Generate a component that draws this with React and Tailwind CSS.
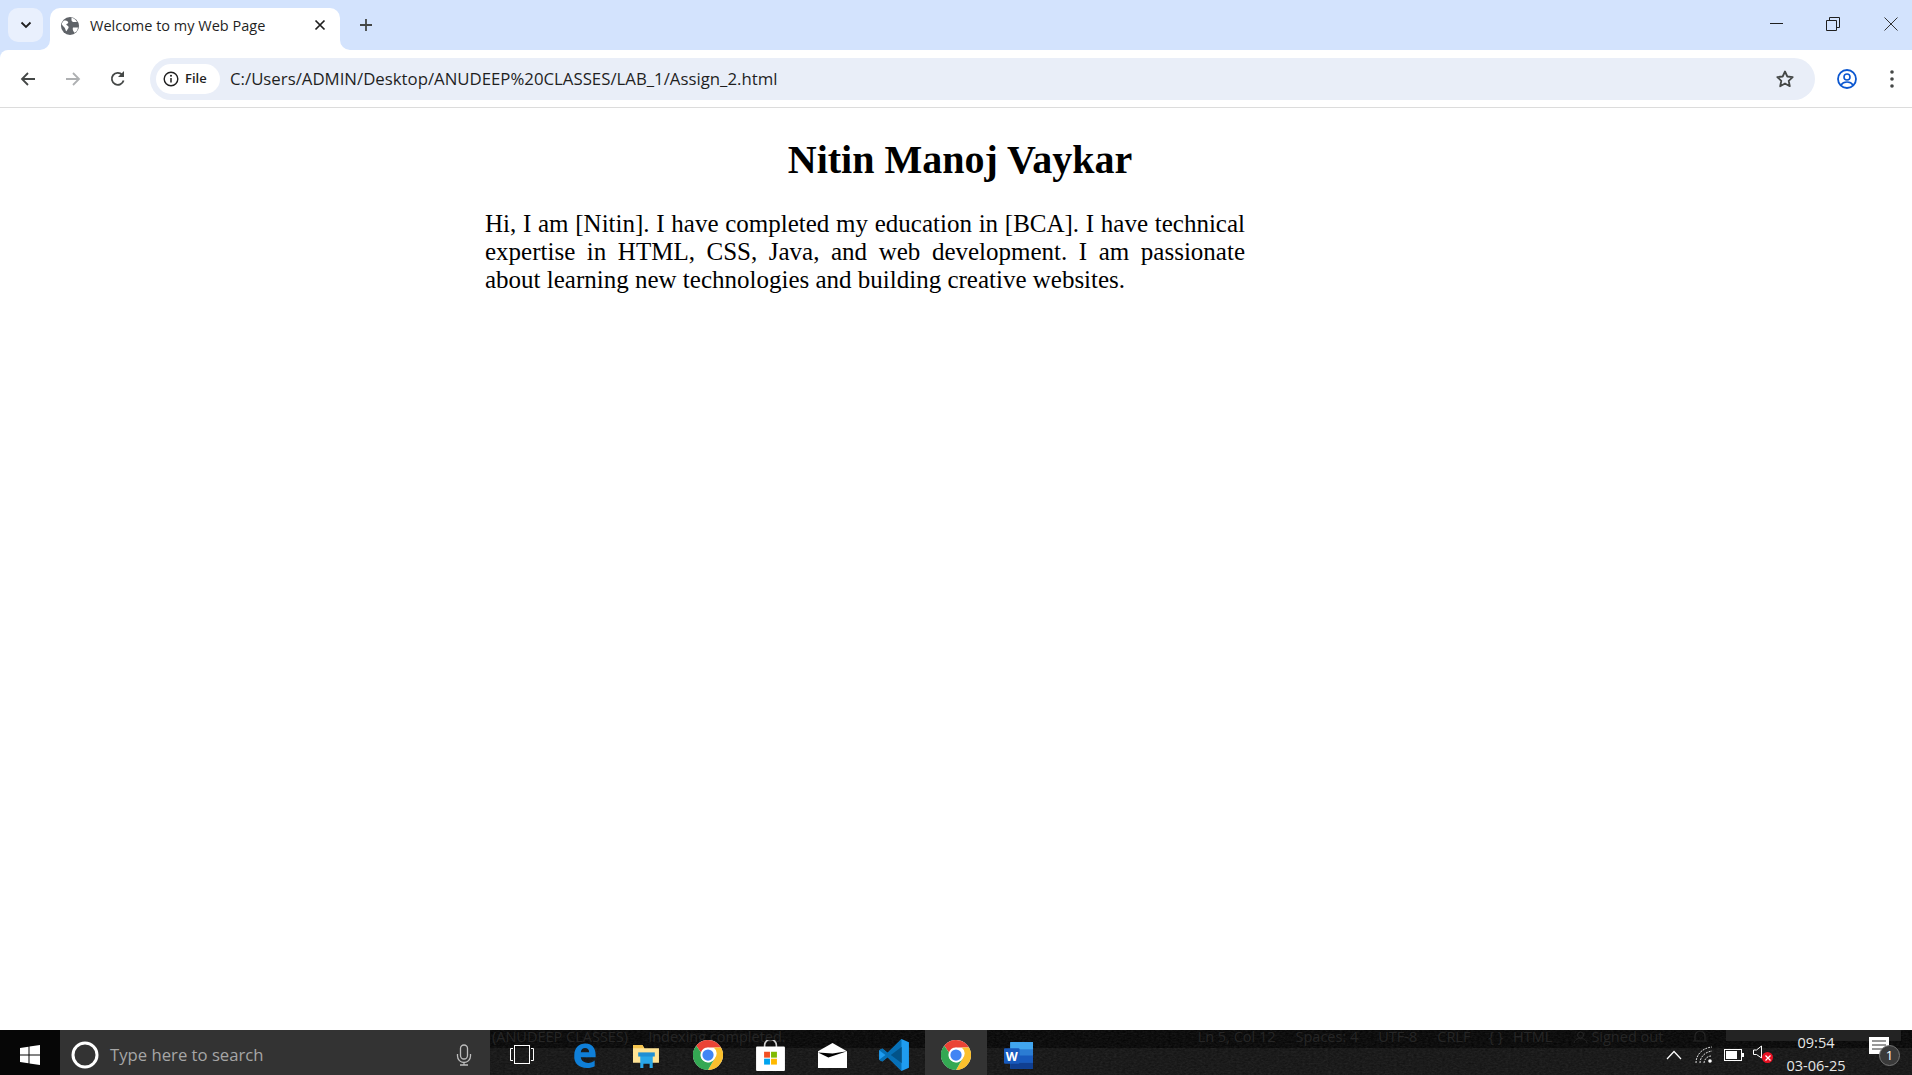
import React from "react";

const UI = { fontFamily: '"Open Sans","Noto Sans",sans-serif' };

function Chrome({ size = 30 }) {
  return (
    <svg width={size} height={size} viewBox="0 0 48 48">
      <circle cx="24" cy="24" r="24" fill="#fff" />
      <path d="M24 0a24 24 0 0 1 20.8 12H24a12 12 0 0 0-11.3 8L5.2 9A24 24 0 0 1 24 0z" fill="#ea4335" />
      <path d="M44.8 12A24 24 0 0 1 24 48l10.4-18A12 12 0 0 0 33 12z" fill="#fbc02d" />
      <path d="M5.2 9A24 24 0 0 0 24 48l10.4-18a12 12 0 0 1-21.7-10z" fill="#34a853" />
      <circle cx="24" cy="24" r="11.5" fill="#fff" />
      <circle cx="24" cy="24" r="9" fill="#4285f4" />
    </svg>
  );
}

function Slot({ children, active }) {
  return (
    <div className={`flex h-[45px] w-[62px] shrink-0 items-center justify-center pt-[5px] ${active ? "bg-[#333333]" : ""}`}>
      {children}
    </div>
  );
}

function Faint({ className = "", children }) {
  return <span className={`whitespace-nowrap ${className}`}>{children}</span>;
}

function Tab() {
  return (
    <div className="relative ml-[7px] mt-[8px] flex h-[42px] w-[290px] items-center rounded-t-[10px] bg-white pb-[7px] pl-[11px]">
      <svg className="absolute bottom-0 left-[-10px]" width="10" height="10" viewBox="0 0 10 10">
        <path d="M10 0v10H0a10 10 0 0 0 10-10z" fill="#fff" />
      </svg>
      <svg className="absolute bottom-0 right-[-10px]" width="10" height="10" viewBox="0 0 10 10">
        <path d="M0 0v10h10A10 10 0 0 1 0 0z" fill="#fff" />
      </svg>
      <svg width="18" height="18" viewBox="0 0 18 18" className="shrink-0">
        <circle cx="9" cy="9" r="9" fill="#5f6368" />
        <path d="M3 3.500c1.500-.3 3 .2 4 1.200.8 1-.5 2-1.500 2.300-.7.7.5 1.500 1.500 2 1 .8.700 2-.2 3-.7 1-1 2-1.800 2.300C4.500 12.500 4 11 3 10 2 9 1 8 .8 7 1 5.800 2 4.500 3 3.500zM10.500.8c2.500.5 4.500 2 5.500 4.200h-3c-1.200 0-2.500-.6-2.500-2zM12 10.500h5c-.3 2.500-1.500 4.300-3.300 5.300-.9-.8-1.700-2-1.900-3.300-.1-.8-.1-1.400.2-2z" fill="#fff" />
      </svg>
      <span style={UI} className="ml-[11px] whitespace-nowrap text-[14.500px] text-[#1f1f1f]">Welcome to my Web Page</span>
      <svg className="absolute left-[262px] top-[9px]" width="16" height="16" viewBox="0 0 16 16">
        <path d="M3.500 3.500l9 9M12.500 3.500l-9 9" stroke="#1f1f1f" strokeWidth="1.700" />
      </svg>
    </div>
  );
}

function TitleBar() {
  return (
    <div className="flex h-[50px] items-start bg-[#d3e3fd]">
      <div className="ml-[8px] mt-[8px] flex h-[34px] w-[35px] items-center justify-center rounded-[10px] bg-[#e9f0fd]">
        <svg width="12" height="8" viewBox="0 0 12 8"><path d="M1.500 1.500L6 6l4.500-4.500" fill="none" stroke="#1f1f1f" strokeWidth="1.800" /></svg>
      </div>
      <Tab />
      <div className="ml-[18px] mt-[17px] flex h-[16px] w-[16px] items-center justify-center">
        <svg width="14" height="14" viewBox="0 0 14 14"><path d="M7 1v12M1 7h12" stroke="#444746" strokeWidth="1.800" /></svg>
      </div>
      <div className="ml-auto mt-[17px] flex items-start">
        <svg width="14" height="14" viewBox="0 0 14 14"><path d="M0 6.500h13" stroke="#1f1f1f" strokeWidth="1" /></svg>
        <svg className="ml-[42px]" width="14" height="14" viewBox="0 0 14 14">
          <path d="M.5 3.500h10v10H.5zM3.500 3.500V.5h10v10h-3" fill="none" stroke="#1f1f1f" strokeWidth="1" />
        </svg>
        <svg className="ml-[44px] mr-[14px]" width="14" height="14" viewBox="0 0 14 14"><path d="M.5.500l13 13M13.500.5l-13 13" stroke="#333" strokeWidth="1" /></svg>
      </div>
    </div>
  );
}

function Toolbar() {
  return (
    <div className="bg-[#d3e3fd]">
      <div className="flex h-[57px] items-center rounded-tl-[8px] bg-white">
        <svg className="ml-[19px] shrink-0" width="18" height="18" viewBox="0 0 18 18"><path d="M16 9H3M9 3L3 9l6 6" fill="none" stroke="#444746" strokeWidth="1.800" /></svg>
        <svg className="ml-[27px] shrink-0" width="18" height="18" viewBox="0 0 18 18"><path d="M2 9h13M9 3l6 6-6 6" fill="none" stroke="#aeb0b2" strokeWidth="1.800" /></svg>
        <svg className="ml-[27px] shrink-0" width="18" height="18" viewBox="0 0 18 18"><path d="M14.600 10.500A6 6 0 1 1 13.300 4.800" fill="none" stroke="#444746" strokeWidth="1.800" /><path d="M15 1v6H9z" fill="#444746" /></svg>
        <div className="ml-[23px] flex h-[42px] w-[1665px] shrink-0 items-center rounded-full bg-[#e9eef8] pl-[6px]">
          <div className="flex h-[30px] w-[64px] items-center rounded-full bg-white pl-[7px]">
            <svg width="16" height="16" viewBox="0 0 16 16"><circle cx="8" cy="8" r="6.800" fill="none" stroke="#1f1f1f" strokeWidth="1.400" /><path d="M8 7v4.500" stroke="#1f1f1f" strokeWidth="1.500" /><circle cx="8" cy="4.800" r="1" fill="#1f1f1f" /></svg>
            <span style={UI} className="ml-[6px] text-[13px] font-semibold text-[#1f1f1f]">File</span>
          </div>
          <span style={UI} className="ml-[10px] whitespace-nowrap pt-[1px] text-[16.800px] text-[#1f1f1f]">C:/Users/ADMIN/Desktop/ANUDEEP%20CLASSES/LAB_1/Assign_2.html</span>
          <svg className="ml-auto mr-[20px]" width="20" height="20" viewBox="0 0 20 20"><path d="M10 2.500l2.300 5 5.400.6-4 3.700 1.100 5.400L10 14.500l-4.800 2.700 1.100-5.400-4-3.700 5.400-.6z" fill="none" stroke="#444746" strokeWidth="1.800" strokeLinejoin="round" /></svg>
        </div>
        <svg className="ml-[22px] shrink-0" width="20" height="20" viewBox="0 0 20 20">
          <circle cx="10" cy="10" r="9" fill="none" stroke="#0b57d0" strokeWidth="1.800" />
          <circle cx="10" cy="8" r="3" fill="none" stroke="#0b57d0" strokeWidth="1.600" />
          <path d="M4 16c1.500-2.500 3.500-3 6-3s4.500.5 6 3" fill="none" stroke="#0b57d0" strokeWidth="1.600" />
        </svg>
        <svg className="ml-[33px] shrink-0" width="4" height="18" viewBox="0 0 4 18"><circle cx="2" cy="2" r="1.800" fill="#444746" /><circle cx="2" cy="9" r="1.800" fill="#444746" /><circle cx="2" cy="16" r="1.800" fill="#444746" /></svg>
      </div>
      <div className="h-[1px] bg-[#dcdcdc]" />
    </div>
  );
}

function Page() {
  return (
    <main className="min-h-0 flex-1 bg-white text-black" style={{ fontFamily: '"Liberation Serif","Times New Roman",serif' }}>
      <h1 className="mt-[29px] pl-[8px] text-center text-[40px] font-bold leading-[46px]">Nitin Manoj Vaykar</h1>
      <p className="ml-[485px] mt-[27px] w-[760px] text-justify text-[25px] leading-[28px]">
        Hi, I am [Nitin]. I have completed my education in [BCA]. I have technical expertise in HTML, CSS, Java, and web development. I am passionate about learning new technologies and building creative websites.
      </p>
    </main>
  );
}

function Taskbar() {
  return (
    <footer className="relative flex h-[45px] items-stretch bg-[#111111]" style={UI}>
      <div className="absolute inset-x-0 top-0 h-[18px] bg-[#030303]" />
      <svg className="absolute inset-0 h-full w-full opacity-[0.12]">
        <filter id="grain"><feTurbulence type="fractalNoise" baseFrequency="0.35 0.6" numOctaves="3" /><feColorMatrix type="saturate" values="0" /></filter>
        <rect width="100%" height="100%" filter="url(#grain)" />
      </svg>
      <div className="absolute inset-x-0 top-0 flex h-[13px] items-center text-[14.500px] leading-[13px] text-[#262626]">
        <Faint className="ml-[492px]">(ANUDEEP CLASSES)</Faint>
        <Faint className="ml-[20px]">Indexing completed.</Faint>
        <Faint className="ml-[412px]">Ln 5, Col 12</Faint>
        <Faint className="ml-[20px]">Spaces: 4</Faint>
        <Faint className="ml-[20px]">UTF-8</Faint>
        <Faint className="ml-[20px]">CRLF</Faint>
        <Faint className="ml-[18px]">{"{ }"}</Faint>
        <Faint className="ml-[10px]">HTML</Faint>
        <svg className="ml-[21px]" width="15" height="13" viewBox="0 0 15 13"><circle cx="7.500" cy="5" r="3" fill="none" stroke="#262626" /><path d="M1 13c1-4 4-4.500 6.500-4.500S13 9 14 13" fill="none" stroke="#262626" /></svg>
        <Faint className="ml-[3px]">Signed out</Faint>
        <svg className="ml-[29px]" width="16" height="13" viewBox="0 0 16 13"><path d="M3 11V6a5 5 0 0 1 10 0v5zM1 11h14" fill="none" stroke="#262626" strokeWidth="1.200" /></svg>
        <div className="ml-[18px] h-[11px] w-[175px] self-start bg-[#232323]" />
      </div>

      <div className="relative flex w-[60px] items-center justify-center bg-[#060606] pt-[5px]">
        <svg width="20" height="20" viewBox="0 0 20 20"><path d="M0 3l8.500-1.300v7.800H0zM9.500 1.500L20 0v9.500H9.500zM0 10.500h8.500v7.800L0 17zM9.500 10.500H20V20L9.500 18.500z" fill="#fff" /></svg>
      </div>
      <div className="relative flex w-[430px] items-center bg-[#333333] pt-[5px]">
        <svg className="ml-[11px]" width="28" height="28" viewBox="0 0 28 28"><circle cx="14" cy="14" r="12" fill="none" stroke="#fff" strokeWidth="3" /></svg>
        <span className="ml-[11px] text-[16.700px] text-[#a6a6a6]">Type here to search</span>
        <svg className="ml-auto mr-[18px]" width="16" height="22" viewBox="0 0 16 22"><rect x="4.500" y="1" width="7" height="14" rx="3.500" fill="none" stroke="#bdbdbd" strokeWidth="1.300" /><path d="M1.500 10v2a6.500 6.500 0 0 0 13 0v-2M8 18.500V21M4 21h8" fill="none" stroke="#bdbdbd" strokeWidth="1.300" /></svg>
      </div>

      <div className="relative ml-[1px] flex">
        <Slot>
          <svg width="24" height="20" viewBox="0 0 24 20"><path d="M3 3.500H.5v12H3M21 3.500h2.500v12H21" fill="none" stroke="#fff" strokeWidth="1" /><rect x="4.500" y=".5" width="15" height="18" fill="none" stroke="#fff" strokeWidth="1" /></svg>
        </Slot>
        <Slot>
          <svg width="25" height="25" viewBox="0 0 24 27"><path d="M1 13C1 5 6 .5 13 .5c7 0 11 5 11 12v3H8c.5 4 4 6 8 6 3 0 5-1 7-2.500v6c-2 1-5 2-8.500 2C6 27 0 22 1 13zm7-3h9c0-3-2-4.500-4.500-4.500S8.500 7 8 10z" fill="#0f7fd8" /></svg>
        </Slot>
        <Slot>
          <svg width="27" height="25" viewBox="0 0 26 24"><path d="M0 2h9l2 3h14v14H0z" fill="#ffe394" /><path d="M0 2h9l2 3H0z" fill="#f5c44e" /><path d="M7 11h12v13h-3v-4h-6v4H7z" fill="#29a7e8" /><path d="M5 9h16v4H5z" fill="#1f8fd3" /></svg>
        </Slot>
        <Slot><Chrome /></Slot>
        <Slot>
          <svg width="29" height="31" viewBox="0 0 27 29"><path d="M8 8V5a5.500 5.500 0 0 1 11 0v3" fill="none" stroke="#cfcfcf" strokeWidth="1.500" /><rect y="6" width="27" height="23" rx="1" fill="#fff" /><rect x="7.500" y="11" width="5.500" height="5.500" fill="#f25022" /><rect x="14" y="11" width="5.500" height="5.500" fill="#7fba00" /><rect x="7.500" y="17.500" width="5.500" height="5.500" fill="#00a4ef" /><rect x="14" y="17.500" width="5.500" height="5.500" fill="#ffb900" /></svg>
        </Slot>
        <Slot>
          <svg width="29" height="25" viewBox="0 0 28 24"><path d="M0 8L14 0l14 8v16H0z" fill="#fff" /><path d="M0 9l14 1 14-2-18 6z" fill="#000" /></svg>
        </Slot>
        <Slot>
          <svg width="30" height="32" viewBox="0 0 28 30"><path d="M21 0l7 3v24l-7 3L8 17l-5 4-3-1.500v-9L3 9l5 4z" fill="#1f9cf0" /><path d="M21 7.500v15L11 15z" fill="#0b0b0b" /><path d="M21 0L8 13 3 9l-3 1.500 6 4.500-6 4.500L3 21l5-4 13 13z" fill="#0065a9" opacity="0.8" /></svg>
        </Slot>
        <Slot active><Chrome /></Slot>
        <Slot>
          <svg width="29" height="29" viewBox="0 0 28 28"><rect x="6" y="1" width="22" height="26" rx="1.500" fill="#2b7cd3" /><rect x="6" y="1" width="22" height="7" fill="#41a5ee" /><rect x="6" y="14" width="22" height="7" fill="#185abd" /><rect x="6" y="21" width="22" height="6" fill="#103f91" /><rect y="7" width="15" height="15" rx="1" fill="#185abd" /><text x="7.500" y="19" textAnchor="middle" fontSize="12" fontWeight="700" fill="#fff" fontFamily="Open Sans">W</text></svg>
        </Slot>
      </div>

      <div className="relative ml-auto flex items-center pt-[5px] text-white">
        <svg width="16" height="10" viewBox="0 0 16 10"><path d="M1 9l7-7.500L15 9" fill="none" stroke="#fff" strokeWidth="1.200" /></svg>
        <svg className="ml-[13px]" width="20" height="18" viewBox="0 0 20 18"><path d="M1 17C1 9 7 2 17 1M5 17C5 11 10 6 17 5M9 17c0-3 3-7 7-7" fill="none" stroke="#ddd" strokeWidth="1" strokeDasharray="2 1" /><circle cx="15" cy="15" r="1.800" fill="#fff" /></svg>
        <svg className="ml-[9px]" width="20" height="12" viewBox="0 0 20 12"><rect x=".5" y=".5" width="17" height="11" fill="none" stroke="#fff" /><rect x="2" y="2" width="11" height="8" fill="#fff" /><rect x="18" y="4" width="2" height="4" fill="#fff" /></svg>
        <div className="relative ml-[9px] h-[20px] w-[20px]">
          <svg width="10" height="16" viewBox="0 0 10 16"><path d="M.5 5h3L8.500 1v12l-5-3.500h-3z" fill="none" stroke="#fff" /></svg>
          <div className="absolute left-[9px] top-[7px] flex h-[11px] w-[11px] items-center justify-center rounded-full bg-[#e81123]">
            <svg width="6" height="6" viewBox="0 0 6 6"><path d="M.5.500l5 5M5.500.5l-5 5" stroke="#fff" strokeWidth="1.200" /></svg>
          </div>
        </div>
        <div className="-mt-[3px] ml-[4px] flex w-[78px] flex-col items-center pt-[1px] text-[14.500px] leading-[23px] text-[#e6e6e6]">
          <span>09:54</span>
          <span>03-06-25</span>
        </div>
        <div className="relative ml-[14px] mr-[18px] h-[30px] w-[25px]">
          <svg width="20" height="19" viewBox="0 0 20 19" className="absolute left-[0px] top-[-3px]"><path d="M0 0h20v17H0z" fill="#fff" /><path d="M3 4h14M3 8h14M3 12h14" stroke="#333" strokeWidth="1" /></svg>
          <div className="absolute left-[10px] top-[5px] flex h-[21px] w-[21px] items-center justify-center rounded-full border border-[#777] bg-[#3a3a3a] text-[13px] leading-none text-white">1</div>
        </div>
      </div>
    </footer>
  );
}

export default function App() {
  return (
    <div className="flex h-[1075px] w-[1912px] flex-col overflow-hidden bg-white">
      <TitleBar />
      <Toolbar />
      <Page />
      <Taskbar />
    </div>
  );
}
